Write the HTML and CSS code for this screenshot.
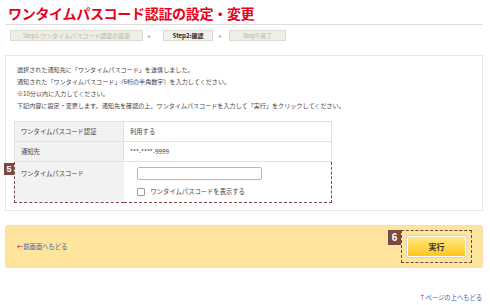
FILE: index.html
```html
<!DOCTYPE html>
<html lang="ja">
<head>
  <meta charset="UTF-8" />
  <meta name="viewport" content="width=device-width, initial-scale=1.0"/>
  <title>ワンタイムパスコード認証の設定・変更</title>
  <link rel="stylesheet" href="styles.css">
</head>
<body>
  <div class="page">
    <h1 class="title">ワンタイムパスコード認証の設定・変更</h1>

    <ol class="steps">
      <li class="step step-1">Step1:ワンタイムパスコード認証の設定</li>
      <li class="sep sep-1">&#9656;</li>
      <li class="step step-2 current">Step2:確認</li>
      <li class="sep sep-2">&#9656;</li>
      <li class="step step-3">Step3:完了</li>
    </ol>

    <div class="panel">
      <div class="notes">
        <p>選択された通知先に「ワンタイムパスコード」を送信しました。</p>
        <p>通知された「ワンタイムパスコード」（6桁の半角数字）を入力してください。</p>
        <p>※10分以内に入力してください。</p>
        <p>下記内容に設定・変更します。通知先を確認の上、ワンタイムパスコードを入力して「実行」をクリックしてください。</p>
      </div>

      <table class="form-table">
        <tr>
          <th>ワンタイムパスコード認証</th>
          <td>利用する</td>
        </tr>
        <tr>
          <th>通知先</th>
          <td>***-****-9999</td>
        </tr>
        <tr class="input-row">
          <th><span class="badge badge-5">5</span>ワンタイムパスコード</th>
          <td>
            <input type="password" class="code-input" />
            <label class="show-code"><span class="check"></span>ワンタイムパスコードを表示する</label>
          </td>
        </tr>
      </table>
    </div>

    <div class="action-bar">
      <a class="back-link" href="#"><span class="arrow">&larr;</span>前画面へもどる</a>
      <div class="submit-wrap">
        <span class="badge badge-6">6</span>
        <button class="submit-btn">実行</button>
      </div>
    </div>

    <div class="pagetop">
      <a href="#"><span class="arrow">&uarr;</span>ページの上へもどる</a>
    </div>
  </div>
</body>
</html>
```

FILE: styles.css
```css
body {
  margin: 0;
  font-family: "Noto Sans CJK JP", "Noto Sans", sans-serif;
  background: #ffffff;
  color: #333333;
}

.page {
  width: 478px;
  padding-left: 5px;
}

.title {
  margin: 0;
  height: 24px;
  padding-left: 3px;
  font-size: 14px;
  line-height: 26px;
  font-weight: bold;
  color: #e8001d;
  letter-spacing: -0.3px;
  border-bottom: 1px solid #dddddd;
}

.steps {
  list-style: none;
  margin: 5px 0 0;
  padding: 0 0 0 5px;
  display: flex;
  height: 11px;
}

.step {
  box-sizing: border-box;
  height: 11px;
  background: #eeeee6;
  border: 1px solid #dcdcd2;
  color: #b4b4a8;
  font-size: 6px;
  line-height: 9px;
  text-align: center;
  white-space: nowrap;
}

.step-1 { width: 133px; }
.step-2 { width: 50px; }
.step-3 { width: 57px; }

.step.current {
  background: #f0f0ee;
  color: #222222;
  font-weight: bold;
}

.sep {
  font-size: 6px;
  line-height: 11px;
  color: #b0b0b0;
}

.sep-1 { width: 20px; padding-left: 5px; box-sizing: border-box; }
.sep-2 { width: 16px; padding-left: 6px; box-sizing: border-box; }

.panel {
  margin-top: 14px;
  border: 1px solid #e6e6e6;
  padding: 8px 8px 7px;
}

.notes {
  padding-left: 3px;
  font-size: 6.1px;
  line-height: 12px;
  color: #444444;
}

.notes p {
  margin: 0;
  white-space: nowrap;
}

.form-table {
  margin-top: 9px;
  width: 318px;
  border-collapse: collapse;
  font-size: 6.3px;
  color: #444444;
}

.form-table th,
.form-table td {
  height: 20px;
  padding: 0 6px;
  border: 1px solid #e2e2e2;
  text-align: left;
  font-weight: normal;
  box-sizing: border-box;
}

.form-table th {
  width: 109px;
  background: #f2f2f2;
  position: relative;
}

.input-row th,
.input-row td {
  height: 41px;
  vertical-align: top;
  border: 1px dashed #7d4a47;
}

.input-row th {
  border-right: none;
  line-height: 12px;
  padding-top: 6px;
}

.input-row td {
  border-left: none;
  padding-top: 5px;
  padding-left: 13px;
}

.code-input {
  display: block;
  box-sizing: border-box;
  width: 125px;
  height: 13px;
  margin: 0;
  border: 1px solid #b8b8b8;
  border-radius: 2px;
  padding: 0 3px;
}

.show-code {
  display: flex;
  align-items: center;
  gap: 6px;
  margin-top: 6px;
  line-height: 12px;
}

.check {
  width: 6px;
  height: 6px;
  border: 1px solid #9a9a9a;
  border-radius: 1px;
  background: #ffffff;
}

.badge {
  position: absolute;
  background: #7b4a42;
  color: #ffffff;
  font-family: "Liberation Sans", Arial, sans-serif;
  font-weight: bold;
  text-align: center;
}

.badge-5 {
  left: -11px;
  top: 1px;
  width: 10px;
  height: 12px;
  font-size: 9px;
  line-height: 12px;
}

.action-bar {
  margin-top: 14px;
  height: 41px;
  background: #fee49c;
  border: 1px solid #fbd9b4;
  border-radius: 3px;
  display: flex;
  align-items: center;
  justify-content: space-between;
  padding: 0 10px 0 11px;
}

.back-link,
.pagetop a {
  font-size: 6.3px;
  color: #3b62b0;
  text-decoration: none;
}

.arrow {
  color: #e8001d;
}

.submit-wrap {
  position: relative;
  border: 1px dashed #6b4a3e;
  padding: 4px;
  display: flex;
}

.badge-6 {
  left: -14px;
  top: -1px;
  width: 13px;
  height: 15px;
  font-size: 10px;
  line-height: 15px;
}

.submit-btn {
  width: 61px;
  height: 23px;
  border: 1px solid #d4d4d4;
  border-radius: 2px;
  box-shadow: inset 0 0 0 1px #ffffff;
  background: linear-gradient(#ffeb8e, #ffc414);
  font-family: "Noto Sans CJK JP", sans-serif;
  font-size: 8px;
  font-weight: bold;
  color: #333333;
  padding: 0;
}

.pagetop {
  margin-top: 24px;
  text-align: right;
  font-size: 6.3px;
  line-height: 12px;
  padding-right: 1px;
}
```
